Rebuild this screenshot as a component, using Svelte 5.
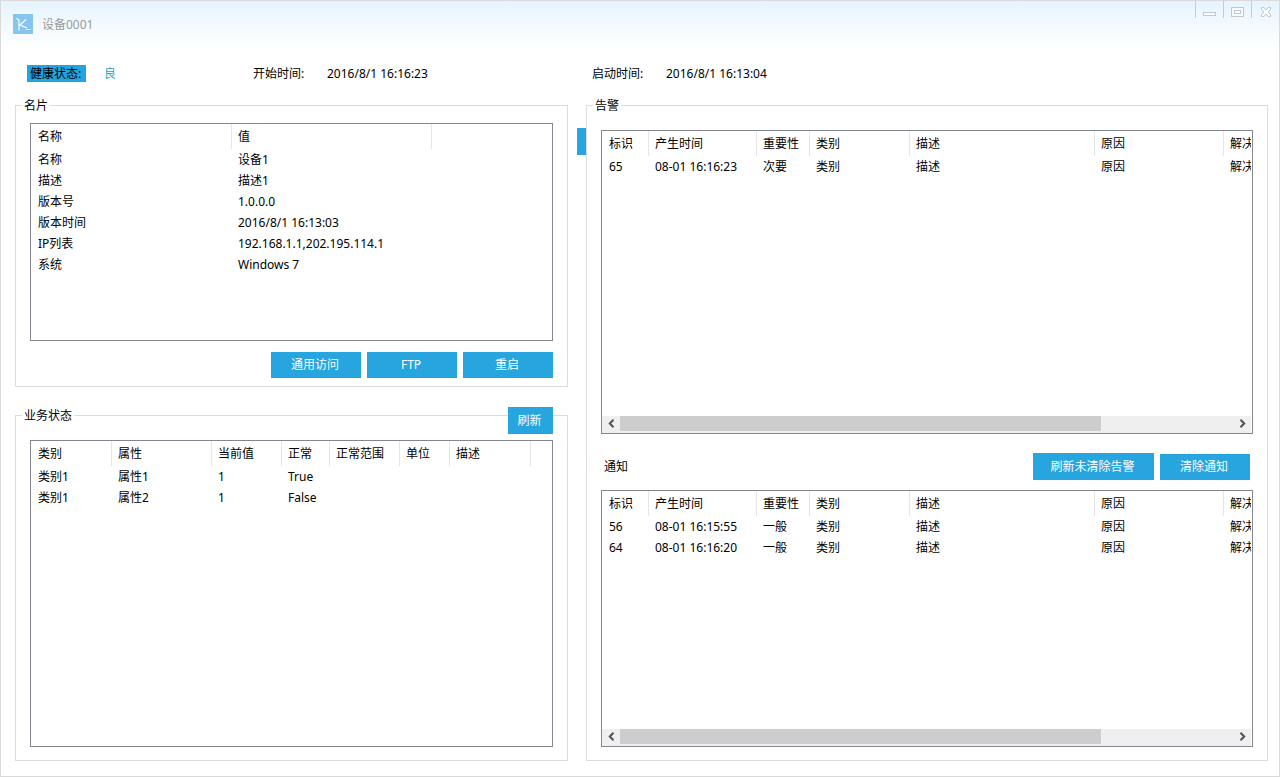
<script>
  const cardColumns = [
    { label: '名称', width: 200 },
    { label: '值', width: 200 }
  ];
  const cardRows = [
    ['名称', '设备1'],
    ['描述', '描述1'],
    ['版本号', '1.0.0.0'],
    ['版本时间', '2016/8/1 16:13:03'],
    ['IP列表', '192.168.1.1,202.195.114.1'],
    ['系统', 'Windows 7']
  ];

  const statusColumns = [
    { label: '类别', width: 80 },
    { label: '属性', width: 100 },
    { label: '当前值', width: 70 },
    { label: '正常', width: 48 },
    { label: '正常范围', width: 70 },
    { label: '单位', width: 50 },
    { label: '描述', width: 81 }
  ];
  const statusRows = [
    ['类别1', '属性1', '1', 'True', '', '', ''],
    ['类别1', '属性2', '1', 'False', '', '', '']
  ];

  const eventColumns = [
    { label: '标识', width: 46 },
    { label: '产生时间', width: 108 },
    { label: '重要性', width: 53 },
    { label: '类别', width: 100 },
    { label: '描述', width: 185 },
    { label: '原因', width: 129 },
    { label: '解决', width: 207 }
  ];
  const alarmRows = [['65', '08-01 16:16:23', '次要', '类别', '描述', '原因', '解决']];
  const noticeRows = [
    ['56', '08-01 16:15:55', '一般', '类别', '描述', '原因', '解决'],
    ['64', '08-01 16:16:20', '一般', '类别', '描述', '原因', '解决']
  ];

  function scrollList(event, distance) {
    const list = event.currentTarget.closest('.list');
    list.querySelector('.viewport').scrollBy({ left: distance });
  }

  function syncThumb(event) {
    const view = event.currentTarget;
    const thumb = view.parentElement.querySelector('.thumb');
    if (thumb) thumb.style.marginLeft = `${(view.scrollLeft / view.scrollWidth) * 100}%`;
  }
</script>

{#snippet grid(name, columns, rows, filler)}
  <table aria-label={name}>
    <colgroup>
      {#each columns as column}
        <col style="width: {column.width}px" />
      {/each}
      {#if filler}<col />{/if}
    </colgroup>
    <thead>
      <tr>
        {#each columns as column}
          <th scope="col">{column.label}</th>
        {/each}
        {#if filler}<th></th>{/if}
      </tr>
    </thead>
    <tbody>
      {#each rows as row}
        <tr>
          {#each row as cell}
            <td>{cell}</td>
          {/each}
          {#if filler}<td></td>{/if}
        </tr>
      {/each}
    </tbody>
  </table>
{/snippet}

{#snippet scrollbar()}
  <div class="scrollbar">
    <button class="arrow" aria-label="向左滚动" onclick={(e) => scrollList(e, -60)}>
      <svg width="7" height="9" viewBox="0 0 7 9"><path d="M5.5 0.8 1.8 4.5l3.7 3.7" /></svg>
    </button>
    <div class="track"><div class="thumb"></div></div>
    <button class="arrow" aria-label="向右滚动" onclick={(e) => scrollList(e, 60)}>
      <svg width="7" height="9" viewBox="0 0 7 9"><path d="M1.5 0.8 5.2 4.5 1.5 8.2" /></svg>
    </button>
  </div>
{/snippet}

<div class="window">
  <header class="titlebar">
    <svg class="logo" width="20" height="20" viewBox="0 0 20 20" aria-hidden="true">
      <rect width="20" height="20" fill="#86c5f0" />
      <path d="M3.500 4.500 6 6v10.500M6 12l7-6.500M8 11.500l6 2.500M13.500 15.500h4" fill="none" stroke="#fff" stroke-width="1.200" />
    </svg>
    <h1>设备0001</h1>
    <div class="controls">
      <button aria-label="最小化">
        <svg width="14" height="12" viewBox="0 0 14 12"><rect x="0.5" y="6.500" width="12" height="3" /></svg>
      </button>
      <button aria-label="最大化">
        <svg width="14" height="12" viewBox="0 0 14 12">
          <rect x="0.5" y="1.500" width="12" height="9" />
          <rect x="3.500" y="4.500" width="6" height="3" />
        </svg>
      </button>
      <button aria-label="关闭">
        <svg width="12" height="12" viewBox="0 0 12 12">
          <path d="M1.500 1.500h2.500l2 2.500 2-2.500h2.500v2L8 6l2.500 2.500v2H8L6 8l-2 2.500H1.500v-2L4 6 1.500 3.500z" />
        </svg>
      </button>
    </div>
  </header>

  <div class="columns summary">
    <div class="facts health">
      <div><span class="badge">健康状态:</span><span class="good">良</span></div>
      <div><span class="key">开始时间:</span><span>2016/8/1 16:16:23</span></div>
    </div>
    <div class="facts">
      <div><span class="key">启动时间:</span><span>2016/8/1 16:13:04</span></div>
    </div>
  </div>

  <main class="columns">
    <div class="column">
      <fieldset class="card">
        <legend>名片</legend>
        <div class="list card-list">
          <div class="viewport">{@render grid('名片', cardColumns, cardRows, true)}</div>
        </div>
        <div class="actions">
          <button class="action">通用访问</button>
          <button class="action">FTP</button>
          <button class="action">重启</button>
        </div>
      </fieldset>

      <div class="pane">
        <fieldset>
          <legend>业务状态</legend>
          <div class="list">
            <div class="viewport">{@render grid('业务状态', statusColumns, statusRows, true)}</div>
          </div>
        </fieldset>
        <button class="action refresh">刷新</button>
      </div>
    </div>

    <div class="column pane">
      <fieldset>
        <legend>告警</legend>
        <div class="list alarm-list">
          <div class="viewport" onscroll={syncThumb}>{@render grid('告警', eventColumns, alarmRows, false)}</div>
          {@render scrollbar()}
        </div>
        <div class="notice-bar">
          <h2>通知</h2>
          <button class="action wide">刷新未清除告警</button>
          <button class="action">清除通知</button>
        </div>
        <div class="list">
          <div class="viewport" onscroll={syncThumb}>{@render grid('通知', eventColumns, noticeRows, false)}</div>
          {@render scrollbar()}
        </div>
      </fieldset>
      <button class="side-tab" aria-label="展开"></button>
    </div>
  </main>
</div>

<style>
  :global(body) {
    margin: 0;
    background: #fff;
  }

  .window {
    box-sizing: border-box;
    min-height: 100vh;
    display: flex;
    flex-direction: column;
    border: 1px solid #d9d9d9;
    background: linear-gradient(#e6f4fe, #fff 48px);
    color: #000;
    font: 12px/16px 'Noto Sans', 'Noto Sans CJK SC', sans-serif;
  }

  button {
    font: inherit;
    border: 0;
    padding: 0;
  }

  h1,
  h2 {
    margin: 0;
    font: inherit;
  }

  .titlebar {
    display: flex;
    align-items: center;
    gap: 9px;
    height: 46px;
    padding-left: 12px;
  }

  .titlebar h1 {
    flex: 1;
    padding-top: 2px;
    color: #999;
  }

  .controls {
    align-self: flex-start;
    display: flex;
  }

  .controls button {
    width: 28px;
    height: 17px;
    display: flex;
    align-items: flex-end;
    justify-content: center;
    background: none;
    border-left: 1px solid #c3ccd2;
  }

  .controls svg {
    fill: #f6fbff;
    stroke: #c3c8cc;
  }

  .columns {
    display: grid;
    grid-template-columns: 553fr 682fr;
    gap: 18px;
    padding: 0 11px 0 14px;
  }

  .summary {
    height: 50px;
    box-sizing: border-box;
    padding-top: 18px;
    line-height: 18px;
  }

  .facts {
    padding-left: 6px;
  }

  .health {
    display: grid;
    grid-template-columns: 226px 1fr;
    padding-left: 12px;
  }

  .facts > div {
    display: flex;
  }

  .key {
    width: 74px;
  }

  .badge {
    width: 53px;
    height: 17px;
    padding: 0 3px;
    margin-right: 18px;
    background: #24a4df;
  }

  .good {
    color: #2b9fb5;
  }

  main.columns {
    flex: 1;
    padding-bottom: 15px;
  }

  .column {
    display: flex;
    flex-direction: column;
    gap: 20px;
    min-width: 0;
  }

  .pane {
    position: relative;
    flex: 1;
    display: flex;
    flex-direction: column;
  }

  fieldset {
    flex: 1;
    display: flex;
    flex-direction: column;
    min-width: 0;
    margin: 0;
    padding: 17px 14px 13px;
    border: 1px solid #dcdcdc;
  }

  .card {
    flex: none;
    padding: 10px 14px 8px;
  }

  legend {
    margin-left: -8px;
    padding: 2px 2px 0;
    line-height: 14px;
  }

  .list {
    flex: 1;
    box-sizing: border-box;
    display: flex;
    flex-direction: column;
    min-width: 0;
    border: 1px solid #828790;
    background: #fff;
  }

  .card-list {
    min-height: 218px;
  }

  .alarm-list {
    flex: none;
    min-height: 304px;
  }

  .viewport {
    flex: 1;
    margin-right: 1px;
    overflow: hidden;
  }

  table {
    width: 100%;
    table-layout: fixed;
    border-collapse: separate;
    border-spacing: 0;
  }

  th,
  td {
    box-sizing: border-box;
    height: 21px;
    padding: 0 0 0 7px;
    font-weight: normal;
    text-align: left;
    white-space: nowrap;
  }

  th {
    height: 25px;
  }

  th + th {
    padding-left: 6px;
    border-left: 1px solid #e5e5e5;
  }

  .scrollbar {
    display: flex;
    height: 17px;
    margin-right: 1px;
    background: #efefef;
  }

  .arrow {
    width: 18px;
    height: 15px;
    display: flex;
    align-items: center;
    justify-content: center;
    background: none;
  }

  .arrow svg {
    fill: none;
    stroke: #505050;
    stroke-width: 2;
  }

  .track {
    flex: 1;
    overflow: hidden;
  }

  .thumb {
    width: 78.5%;
    height: 15px;
    background: #cdcdcd;
  }

  .actions {
    display: flex;
    justify-content: flex-end;
    gap: 6px;
    padding-top: 11px;
  }

  .action {
    width: 90px;
    height: 26px;
    padding-right: 2px;
    background: #26a5df;
    color: #fff;
  }

  .refresh {
    position: absolute;
    top: 0;
    right: 15px;
    width: 45px;
    height: 27px;
  }

  .notice-bar {
    display: flex;
    align-items: flex-end;
    gap: 6px;
    height: 46px;
    padding: 0 3px 10px;
  }

  .notice-bar h2 {
    flex: 1;
    padding-bottom: 5px;
  }

  .notice-bar .wide {
    width: 121px;
    height: 27px;
  }

  .side-tab {
    position: absolute;
    top: 31px;
    left: -9px;
    width: 9px;
    height: 27px;
    background: #26a5df;
  }
</style>
